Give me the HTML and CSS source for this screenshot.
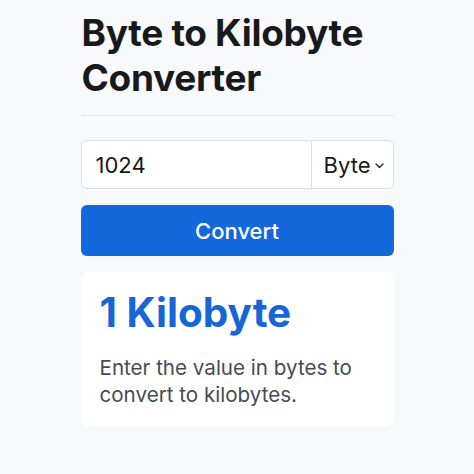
FILE: index.html
```html
<!DOCTYPE html>
<html lang="en">
<head>
<meta charset="utf-8">
<title>Byte to Kilobyte Converter</title>
<link rel="stylesheet" href="styles.css">
</head>
<body>
<main class="wrap">
  <h1 class="title">Byte to Kilobyte Converter</h1>
  <div class="divider"></div>
  <div class="input-group">
    <div class="value">1024</div>
    <div class="unit">Byte<svg class="chev" width="9" height="6" viewBox="0 0 9 6"><path d="M1 1l3.5 3.5L8 1" fill="none" stroke="#222" stroke-width="1.4" stroke-linecap="round" stroke-linejoin="round"/></svg></div>
  </div>
  <button class="btn">Convert</button>
  <section class="card">
    <div class="result">1 Kilobyte</div>
    <p class="desc">Enter the value in bytes to convert to kilobytes.</p>
  </section>
</main>
</body>
</html>
```
FILE: styles.css
```css
html, body {
  margin: 0;
  padding: 0;
  background: #f8f9fb;
}
body {
  font-family: Inter, "Noto Sans", "Liberation Sans", sans-serif;
  color: #17191c;
}
.wrap {
  width: 313px;
  margin: 0 auto;
  padding-top: 10px;
  display: flex;
  flex-direction: column;
}
.title {
  margin: 0 0 0 1px;
  font-size: 37px;
  line-height: 45px;
  font-weight: 700;
  letter-spacing: -0.3px;
}
.divider {
  height: 1px;
  background: #e2e4e8;
  margin-top: 15px;
}
.input-group {
  margin-top: 24px;
  height: 49px;
  display: flex;
  background: #fff;
  border: 1px solid #dcdfe3;
  border-radius: 6px;
  box-sizing: border-box;
}
.value {
  flex: 1;
  display: flex;
  align-items: center;
  padding-left: 14px;
  font-size: 22px;
  color: #17191c;
}
.unit {
  width: 82px;
  border-left: 1px solid #dcdfe3;
  display: flex;
  align-items: center;
  justify-content: flex-end;
  padding-right: 9px;
  box-sizing: border-box;
  font-size: 22px;
  gap: 4px;
}
.chev {
  margin-top: 3px;
}
.btn {
  margin-top: 16px;
  height: 51px;
  border: none;
  border-radius: 6px;
  background: #1368dc;
  color: #fff;
  font-family: inherit;
  font-size: 22px;
  font-weight: 500;
}
.card {
  margin-top: 16px;
  background: #fff;
  border-radius: 8px;
  padding: 17px 18px 20px 19px;
  height: 155px;
  box-sizing: border-box;
}
.result {
  color: #1766d6;
  font-size: 40.5px;
  font-weight: 700;
  line-height: 48px;
}
.desc {
  margin: 17px 0 0;
  font-size: 20.6px;
  line-height: 27px;
  color: #474c54;
}
```
